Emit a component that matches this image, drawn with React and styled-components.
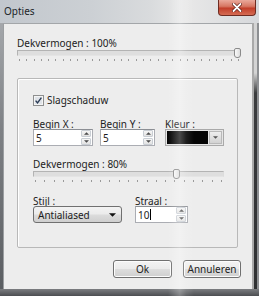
import React from 'react'
import styled, { createGlobalStyle } from 'styled-components'

const GlobalStyle = createGlobalStyle`
  html, body {
    margin: 0;
    padding: 0;
    background: #5e6166;
  }
  body {
    font-family: "Noto Sans", "Open Sans", sans-serif;
    font-size: 10px;
    color: #1c1c1c;
  }
  #root {
    width: 259px;
    height: 296px;
    overflow: hidden;
  }
`

const Window = styled.div`
  position: relative;
  width: 259px;
  height: 296px;
  display: flex;
  flex-direction: column;
  overflow: hidden;
`

const TitleBar = styled.div`
  height: 23px;
  flex: none;
  display: flex;
  justify-content: space-between;
  align-items: flex-start;
  background: linear-gradient(90deg, #c2c7cd 0%, #ccd0d4 35%, #d9dbdd 58%, #e8e8e8 72%, #d6d8db 100%);
`

const Title = styled.span`
  padding: 5px 0 0 4px;
  line-height: 12px;
  color: #202428;
`

const CloseButton = styled.div`
  width: 38px;
  height: 16px;
  margin-right: 3px;
  box-sizing: border-box;
  border: 1px solid #6e2c22;
  border-top: none;
  border-radius: 0 0 4px 4px;
  background: linear-gradient(180deg, #eaa99b 0%, #d77763 42%, #c23f2a 55%, #d56c54 100%);
  display: flex;
  align-items: center;
  justify-content: center;
`

const Middle = styled.div`
  flex: 1;
  display: flex;
`

const LeftFrame = styled.div`
  width: 3px;
  background: linear-gradient(180deg, #a4a7ab 0%, #7e8185 40%, #5b5e62 100%);
`

const RightFrame = styled.div`
  width: 7px;
  background:
    linear-gradient(90deg, #a9a9a9 0 2px, transparent 2px 5px, #8d8f92 5px 7px),
    linear-gradient(180deg, #d4d4d4 0, #d4d4d4 50px, #3b3c3e 70px, #2f3032 100%);
`

const BottomFrame = styled.div`
  height: 7px;
  flex: none;
  background: linear-gradient(180deg, #7b7d80 0%, #4c4e52 100%);
`

const Client = styled.div`
  flex: 1;
  display: flex;
  flex-direction: column;
  background: #ededed;
  border-top: 1px solid #a3a6a9;
  border-left: 1px solid #9b9ea1;
  padding: 13px 11px 0 13px;
`

const Label = styled.div`
  line-height: 12px;
  height: ${p => p.$h || 12}px;
  white-space: nowrap;
`

const SliderWrap = styled.div`
  position: relative;
  width: ${p => p.$w}px;
  height: 14px;
  flex: none;
`

const Track = styled.div`
  position: absolute;
  left: 0;
  right: 0;
  top: 1px;
  height: 4px;
  border: 1px solid #b3b3b3;
  border-bottom-color: #e4e4e4;
  border-right-color: #dcdcdc;
  background: #dedede;
`

const Thumb = styled.div`
  position: absolute;
  top: -1px;
  width: 5px;
  height: 8px;
  border: 1px solid #8a8a8a;
  border-radius: 2px 2px 3px 3px;
  background: linear-gradient(90deg, #fafafa, #dcdcdc);
`

const Ticks = styled.div`
  position: absolute;
  left: 2px;
  right: 2px;
  top: 10px;
  height: 2px;
  display: flex;
  justify-content: space-between;
`

const Tick = styled.span`
  width: 1px;
  height: 2px;
  background: #9a9a9a;
`

const GroupBox = styled.div`
  margin-top: 15px;
  width: 221px;
  height: 170px;
  flex: none;
  border: 1px solid #b8b8b8;
  border-radius: 2px;
  box-shadow: inset 1px 1px 0 #ffffff;
  padding: 15px 0 0 15px;
  box-sizing: border-box;
  display: flex;
  flex-direction: column;
`

const CheckRow = styled.div`
  display: flex;
  align-items: center;
  gap: 3px;
  height: 12px;
`

const FieldRow = styled.div`
  display: grid;
  grid-template-columns: ${p => p.$cols};
  margin-top: ${p => p.$mt}px;
`

const Field = styled.div`
  display: flex;
  flex-direction: column;
`

const TextBox = styled.div`
  width: ${p => p.$w}px;
  height: 17px;
  box-sizing: border-box;
  border: 1px solid #abadb3;
  border-top-color: #8c8f94;
  background: #ffffff;
  display: flex;
  align-items: center;
  padding-left: 2px;
`

const BoxText = styled.span`
  flex: 1;
  line-height: 12px;
  display: flex;
  align-items: center;
`

const Caret = styled.span`
  width: 1px;
  height: 11px;
  background: #000;
  margin-left: 1px;
`

const Spinner = styled.div`
  width: 10px;
  height: 15px;
  margin-right: 1px;
  display: flex;
  flex-direction: column;
  gap: 1px;
`

const SpinButton = styled.div`
  flex: 1;
  border: 1px solid #c9ced4;
  border-radius: 1px;
  background: linear-gradient(180deg, #f6f6f6, #e2e2e2);
  display: flex;
  align-items: center;
  justify-content: center;
`

const ColorBox = styled.div`
  width: 59px;
  height: 17px;
  box-sizing: border-box;
  border: 1px solid #a9a9a9;
  padding: 1px;
  display: flex;
  gap: 1px;
  background: #e6e6e6;
`

const Swatch = styled.div`
  flex: 1;
  background: #050505;
`

const ColorDrop = styled.div`
  width: 11px;
  border: 1px solid #b9b9b9;
  background: linear-gradient(180deg, #eeeeee, #d2d2d2);
  display: flex;
  align-items: center;
  justify-content: center;
`

const Combo = styled.div`
  width: 89px;
  height: 17px;
  box-sizing: border-box;
  border: 1px solid #707070;
  border-radius: 3px;
  background: linear-gradient(180deg, #f3f3f3 0%, #ebebeb 48%, #dcdcdc 52%, #cfcfcf 100%);
  display: flex;
  align-items: center;
  justify-content: space-between;
  padding: 0 5px 0 4px;
`

const ButtonRow = styled.div`
  display: flex;
  justify-content: flex-end;
  gap: 11px;
  margin-top: 12px;
`

const Button = styled.div`
  width: ${p => p.$w}px;
  height: 18px;
  box-sizing: border-box;
  border: 1px solid #707070;
  border-radius: 3px;
  background: linear-gradient(180deg, #f3f3f3 0%, #ebebeb 48%, #dddddd 52%, #cfcfcf 100%);
  box-shadow: inset 0 0 0 1px #fcfcfc;
  display: flex;
  align-items: center;
  justify-content: center;
  line-height: 12px;
`

const Glare = styled.div`
  position: absolute;
  top: 0;
  bottom: 0;
  left: 168px;
  width: 26px;
  pointer-events: none;
  background: linear-gradient(90deg, rgba(255,255,255,0) 0%, rgba(255,255,255,0.28) 45%, rgba(255,255,255,0.1) 70%, rgba(255,255,255,0) 100%);
`

const Arrow = ({ up, size = 5, color = '#4a4a4a' }) => (
  <svg width={size} height={Math.ceil(size / 2)} viewBox="0 0 6 3">
    <path d={up ? 'M0 3 L3 0 L6 3 Z' : 'M0 0 L6 0 L3 3 Z'} fill={color} />
  </svg>
)

const Slider = ({ width, value, ticks }) => (
  <SliderWrap $w={width}>
    <Track />
    <Thumb style={{ left: Math.round(value * (width - 7)) }} />
    <Ticks>
      {Array.from({ length: ticks }).map((_, i) => <Tick key={i} />)}
    </Ticks>
  </SliderWrap>
)

const SpinBox = ({ width, children }) => (
  <TextBox $w={width}>
    <BoxText>{children}</BoxText>
    <Spinner>
      <SpinButton><Arrow up size={5} /></SpinButton>
      <SpinButton><Arrow size={5} /></SpinButton>
    </Spinner>
  </TextBox>
)

const CheckBox = () => (
  <svg width="11" height="11" viewBox="0 0 11 11">
    <rect x="0.5" y="0.5" width="10" height="10" fill="#f4f4f4" stroke="#8e8f8f" />
    <rect x="2" y="2" width="7" height="7" fill="#dfe3e8" />
    <path d="M2.6 5.6 L4.5 7.8 L8.4 2.6" fill="none" stroke="#2a3b55" strokeWidth="1.4" />
  </svg>
)

export default function App() {
  return (
    <>
      <GlobalStyle />
      <Window>
        <TitleBar>
          <Title>Opties</Title>
          <CloseButton>
            <svg width="10" height="9" viewBox="0 0 10 9">
              <path d="M1.5 1 L8.5 8 M8.5 1 L1.5 8" stroke="#5a1a12" strokeWidth="3.2" strokeLinecap="round" />
              <path d="M1.5 1 L8.5 8 M8.5 1 L1.5 8" stroke="#ffffff" strokeWidth="1.8" strokeLinecap="round" />
            </svg>
          </CloseButton>
        </TitleBar>
        <Middle>
          <LeftFrame />
          <Client>
            <Label>Dekvermogen : 100%</Label>
            <Slider width={224} value={1} ticks={31} />
            <GroupBox>
              <CheckRow>
                <CheckBox />
                <span>Slagschaduw</span>
              </CheckRow>
              <FieldRow $cols="67px 65px auto" $mt={12}>
                <Field>
                  <Label $h={11}>Begin X :</Label>
                  <SpinBox width={60}>5</SpinBox>
                </Field>
                <Field>
                  <Label $h={11}>Begin Y :</Label>
                  <SpinBox width={55}>5</SpinBox>
                </Field>
                <Field>
                  <Label $h={11}>Kleur :</Label>
                  <ColorBox>
                    <Swatch />
                    <ColorDrop><Arrow size={5} color="#555" /></ColorDrop>
                  </ColorBox>
                </Field>
              </FieldRow>
              <Label style={{ marginTop: 12 }}>Dekvermogen : 80%</Label>
              <Slider width={191} value={0.76} ticks={21} />
              <FieldRow $cols="102px auto" $mt={11}>
                <Field>
                  <Label $h={11}>Stijl :</Label>
                  <Combo>
                    <span>Antialiased</span>
                    <Arrow size={7} color="#111" />
                  </Combo>
                </Field>
                <Field>
                  <Label $h={11}>Straal :</Label>
                  <SpinBox width={53}>10<Caret /></SpinBox>
                </Field>
              </FieldRow>
            </GroupBox>
            <ButtonRow>
              <Button $w={59}>Ok</Button>
              <Button $w={58}>Annuleren</Button>
            </ButtonRow>
          </Client>
          <RightFrame />
        </Middle>
        <BottomFrame />
        <Glare />
      </Window>
    </>
  )
}
